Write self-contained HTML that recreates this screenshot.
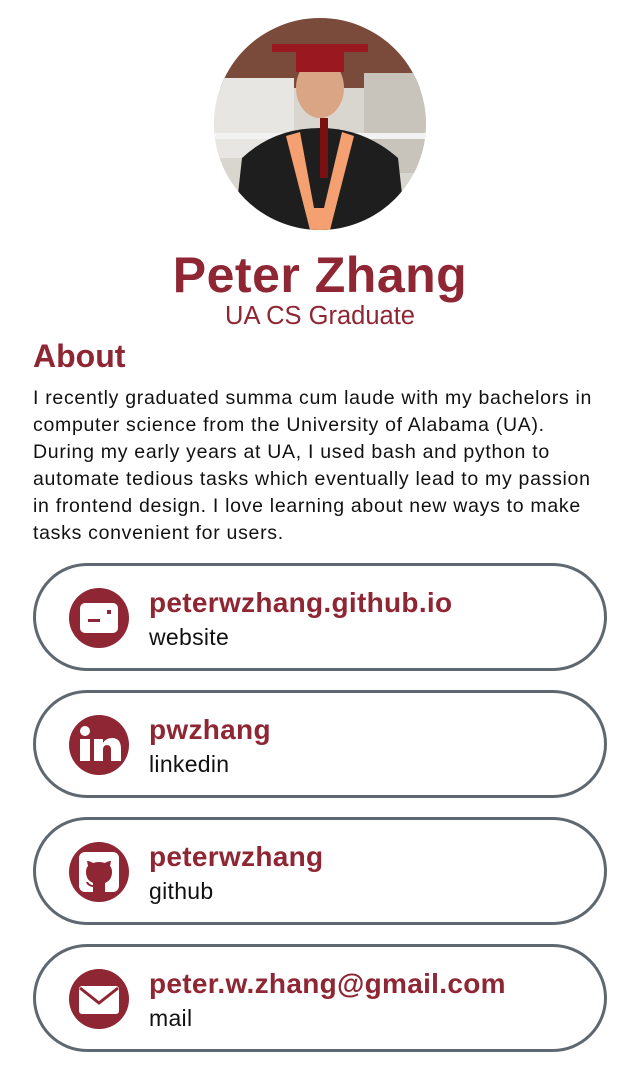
<!DOCTYPE html>
<html><head><meta charset="utf-8"><style>
*{margin:0;padding:0;box-sizing:border-box}
body{width:640px;height:1068px;background:#fff;font-family:"Liberation Sans",sans-serif;position:relative;overflow:hidden}
.photo{position:absolute;left:214px;top:18px;width:212px;height:212px;border-radius:50%;overflow:hidden}
h1{position:absolute;top:246px;left:0;width:640px;text-align:center;font-size:50px;font-weight:bold;color:#8f2633;letter-spacing:0.5px}
.sub{position:absolute;top:302px;left:0;width:640px;text-align:center;font-size:25.5px;color:#8f2633}
h2{position:absolute;top:338px;left:33px;font-size:32px;font-weight:bold;color:#8f2633}
.about{position:absolute;top:385px;left:33px;width:600px;font-size:19.5px;letter-spacing:0.7px;line-height:27px;color:#111;white-space:nowrap}
.card{position:absolute;left:33px;width:574px;height:108px;border:3px solid #5f6870;border-radius:54px}
.ic{position:absolute;left:33px;top:22px;width:60px;height:60px;border-radius:50%;background:#8f2633}
.ic svg{width:60px;height:60px}
.t1{position:absolute;left:113px;top:21px;font-size:28px;letter-spacing:0.3px;font-weight:bold;color:#8f2633}
.t2{position:absolute;left:113px;top:58px;font-size:23px;letter-spacing:0.3px;color:#111}
</style></head><body>
<div class="photo"><svg width="212" height="212" viewBox="0 0 212 212">
<rect width="212" height="212" fill="#d9d6d0"/>
<rect width="212" height="70" fill="#7a4a3a"/>
<rect x="0" y="60" width="80" height="80" fill="#e8e6e2"/>
<rect x="150" y="55" width="62" height="100" fill="#c8c4bc"/>
<rect x="0" y="115" width="212" height="6" fill="#f2f2f2"/>
<path d="M20 212 L28 140 Q60 110 106 110 Q150 110 184 140 L192 212Z" fill="#1e1e1e"/>
<path d="M72 118 L96 212 L116 212 L140 118 L128 114 L110 190 L100 190 L86 114Z" fill="#f4a070"/>
<ellipse cx="106" cy="70" rx="24" ry="30" fill="#d9a585"/>
<rect x="58" y="26" width="96" height="8" fill="#9a1820"/>
<rect x="82" y="32" width="48" height="22" fill="#9a1820"/>
<rect x="106" y="100" width="8" height="60" fill="#7a1010"/>
</svg></div>
<h1>Peter Zhang</h1>
<div class="sub">UA CS Graduate</div>
<h2>About</h2>
<div class="about">I recently graduated summa cum laude with my bachelors in<br>computer science from the University of Alabama (UA).<br>During my early years at UA, I used bash and python to<br>automate tedious tasks which eventually lead to my passion<br>in frontend design. I love learning about new ways to make<br>tasks convenient for users.</div>

<div class="card" style="top:563px"><div class="ic"><svg viewBox="0 0 60 60"><rect x="11" y="15" width="38" height="30" rx="5" fill="#fff"/><rect x="19" y="31" width="12" height="3" fill="#8f2633"/><rect x="38" y="22" width="4" height="4" fill="#8f2633"/></svg></div><div class="t1">peterwzhang.github.io</div><div class="t2">website</div></div>

<div class="card" style="top:690px"><div class="ic"><svg viewBox="0 0 60 60"><circle cx="16" cy="16" r="5" fill="#fff"/><rect x="11" y="24" width="10" height="22" fill="#fff"/><path d="M25 24h9v4q3-5 9-5q9 0 9 11v12h-10v-11q0-5-4-5q-4 0-4 5v11h-9z" fill="#fff"/></svg></div><div class="t1">pwzhang</div><div class="t2">linkedin</div></div>

<div class="card" style="top:817px"><div class="ic"><svg viewBox="0 0 60 60"><rect x="10" y="10" width="40" height="40" rx="6" fill="#fff"/><path d="M24 50 L24 45 Q18 44 17 40 L19 40 Q21 43 24 43 L24 41 Q17 38 17 30 Q17 26 19 24 L18 19 Q21 19 24 21 Q30 19 36 21 Q39 19 42 19 L41 24 Q43 26 43 30 Q43 38 36 41 L36 50Z" fill="#8f2633"/></svg></div><div class="t1">peterwzhang</div><div class="t2">github</div></div>

<div class="card" style="top:944px"><div class="ic"><svg viewBox="0 0 60 60"><rect x="10" y="17" width="40" height="28" rx="3" fill="#fff"/><path d="M11 19 L30 34 L49 19" fill="none" stroke="#8f2633" stroke-width="3"/></svg></div><div class="t1">peter.w.zhang@gmail.com</div><div class="t2">mail</div></div>
</body></html>
